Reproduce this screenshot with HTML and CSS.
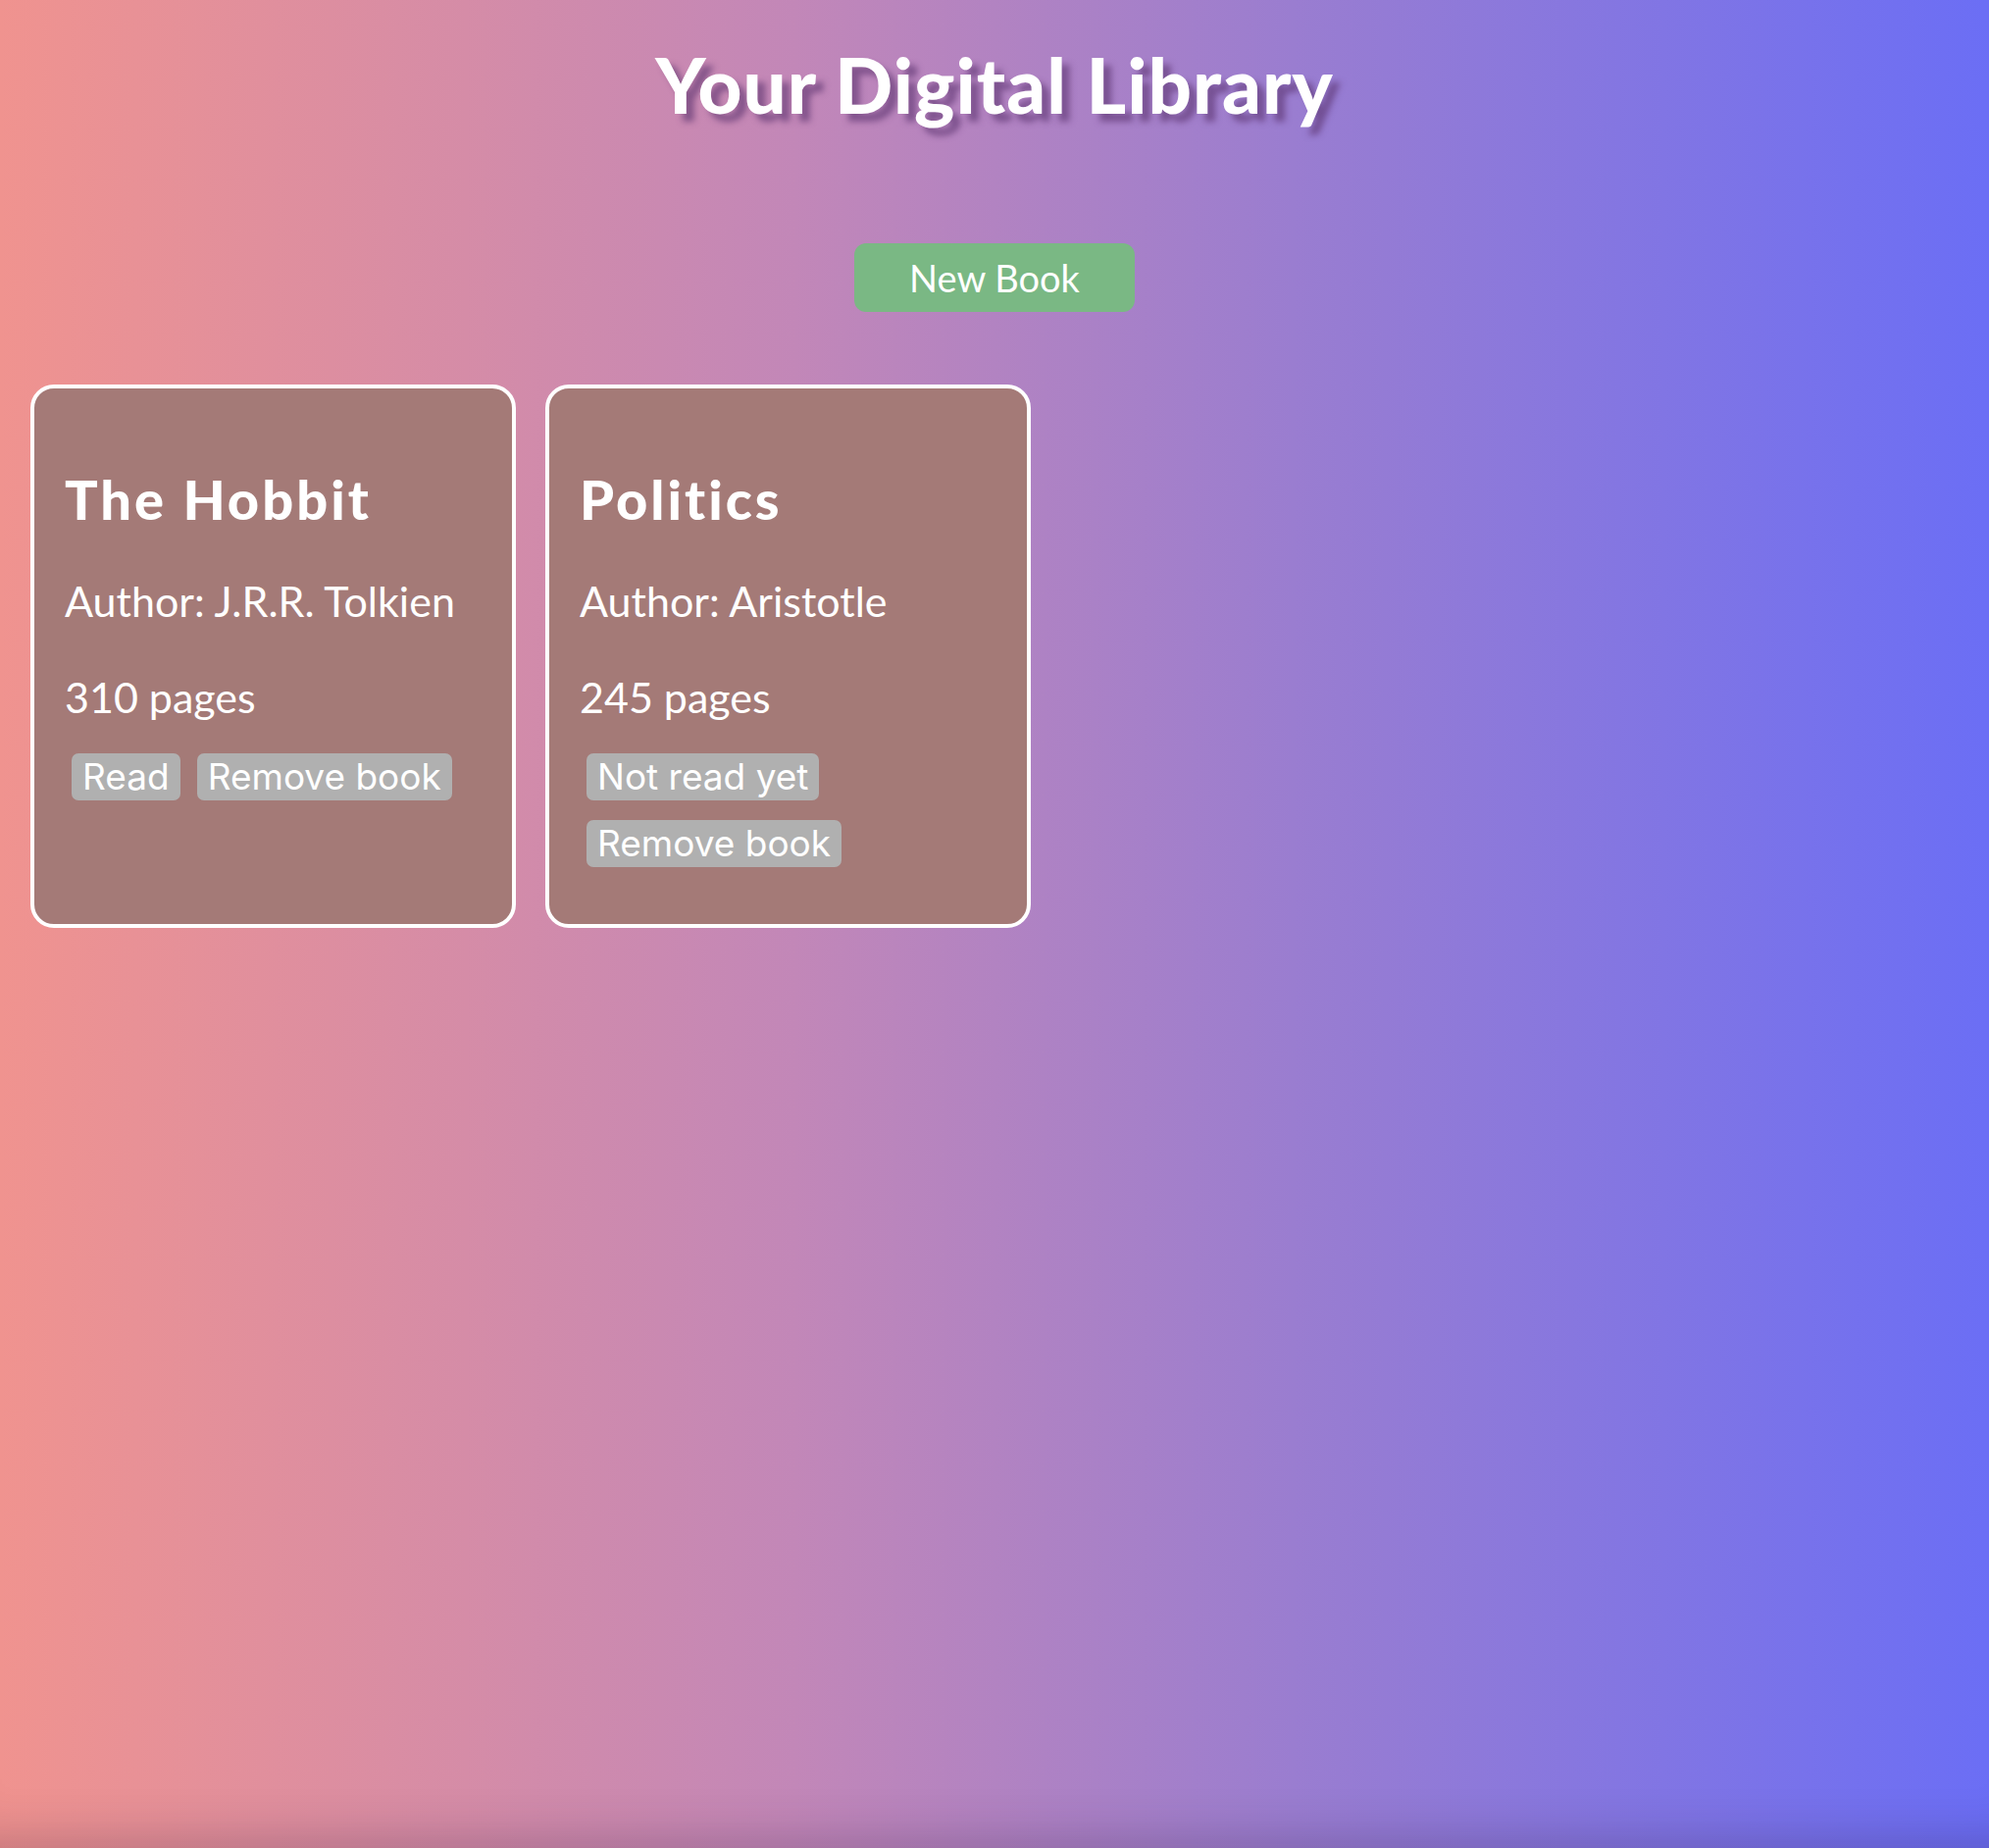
FILE: index.html
```html
<!DOCTYPE html>
<html lang="en">
<head>
<meta charset="utf-8">
<title>Your Digital Library</title>
<link rel="stylesheet" href="styles.css">
</head>
<body>
<div class="page">
  <header class="header">
    <h1 class="title">Your Digital Library</h1>
  </header>
  <div class="actions">
    <button class="new-book">New Book</button>
  </div>
  <main class="library">
    <article class="card">
      <h2 class="card-title">The Hobbit</h2>
      <p class="card-line">Author: J.R.R. Tolkien</p>
      <p class="card-line card-pages">310 pages</p>
      <div class="card-buttons">
        <button class="card-btn">Read</button>
        <button class="card-btn">Remove book</button>
      </div>
    </article>
    <article class="card">
      <h2 class="card-title">Politics</h2>
      <p class="card-line">Author: Aristotle</p>
      <p class="card-line card-pages">245 pages</p>
      <div class="card-buttons">
        <button class="card-btn">Not read yet</button>
        <button class="card-btn">Remove book</button>
      </div>
    </article>
  </main>
</div>
</body>
</html>
```
FILE: styles.css
```css
html, body {
  margin: 0;
  padding: 0;
}

body {
  min-height: 100vh;
  background: linear-gradient(to right, #f0938f 0%, #c287b8 40%, #9a7dd0 65%, #6b6ef5 100%);
  font-family: "Lato", "Open Sans", sans-serif;
  color: #ffffff;
}

.page {
  min-height: 100vh;
  box-sizing: border-box;
  padding: 0 0 40px 31px;
  box-shadow: inset 0 -60px 50px -50px rgba(40, 20, 60, 0.24);
}

.header {
  display: flex;
  justify-content: center;
  padding-top: 40px;
  padding-right: 31px;
}

.title {
  margin: 0;
  font-family: "Lato", sans-serif;
  font-weight: 900;
  font-size: 78px;
  line-height: 1.2;
  letter-spacing: 1px;
  color: #ffffff;
  text-shadow: 8px 8px 6px rgba(90, 50, 110, 0.6);
}

.actions {
  display: flex;
  justify-content: center;
  margin-top: 114px;
  padding-right: 31px;
}

.new-book {
  width: 286px;
  height: 70px;
  border: none;
  border-radius: 12px;
  background: #7ab884;
  color: #ffffff;
  font-family: "Lato", sans-serif;
  font-size: 38px;
  font-weight: 400;
  cursor: pointer;
}

.library {
  display: flex;
  gap: 30px;
  margin-top: 74px;
}

.card {
  box-sizing: border-box;
  width: 495px;
  height: 554px;
  padding: 79px 30px 30px 31px;
  border: 4px solid #ffffff;
  border-radius: 24px;
  background: #a47a77;
}

.card-title {
  margin: 0;
  font-family: "Lato", sans-serif;
  font-weight: 900;
  font-size: 56px;
  line-height: 1.2;
  letter-spacing: 3px;
}

.card-line {
  margin: 45px 0 0 0;
  font-size: 43px;
  line-height: 1.2;
}

.card-pages {
  margin-top: 47px;
}

.card-buttons {
  display: flex;
  flex-wrap: wrap;
  gap: 20px 17px;
  margin-top: 31px;
  padding-left: 7px;
}

.card-btn {
  height: 48px;
  padding: 0 11px;
  border: none;
  border-radius: 7px;
  background: #b0b0b0;
  color: #ffffff;
  font-family: "Inter", "Liberation Sans", sans-serif;
  font-size: 37px;
  line-height: 48px;
}
```
